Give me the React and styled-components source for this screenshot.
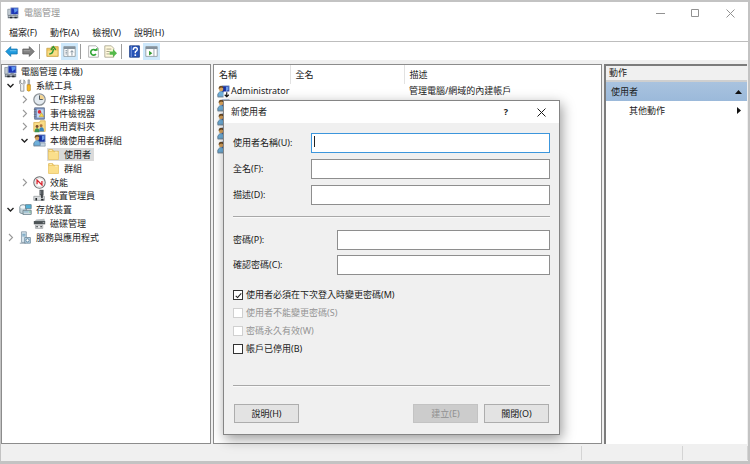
import React from 'react';
import styled, { createGlobalStyle, css } from 'styled-components';

const GlobalStyle = createGlobalStyle`
  *, *::before, *::after { box-sizing: border-box; }
  body {
    margin: 0;
    background: #fff;
    color: #1a1a1a;
    font: 9px/14px "Noto Sans", "Noto Sans CJK TC", sans-serif;
  }
  button, input { font: inherit; color: inherit; }
`;

const Window = styled.div`
  position: relative;
  display: flex;
  flex-direction: column;
  min-height: 100vh;
  border: solid #c3c3c3;
  border-width: 2px 2px 3px 1px;
  background: #f0f0f0;
`;

const TitleBar = styled.header`
  display: flex;
  align-items: center;
  gap: 5px;
  height: 22px;
  padding: 0 13px 0 6px;
  background: #fff;
  color: #929292;
`;

const WindowTitle = styled.h1`
  flex: 1;
  margin: 0;
  font: inherit;
`;

const WindowControls = styled.div`
  display: flex;
  gap: 25px;
`;

const IconButton = styled.button`
  display: flex;
  align-items: center;
  justify-content: center;
  width: 10px;
  height: 14px;
  padding: 0;
  border: 0;
  background: none;
`;

const MenuBar = styled.nav`
  display: flex;
  gap: 13px;
  height: 18px;
  padding: 0 8px;
  border-bottom: 1px solid #bdbdbd;
  background: #fff;
`;

const MenuButton = styled.button`
  padding: 0;
  border: 0;
  background: none;
  line-height: 17px;
`;

const Toolbar = styled.div`
  display: flex;
  align-items: center;
  height: 18px;
  padding-left: 2px;
  background: #fff;
`;

const ToolButton = styled.button`
  display: flex;
  align-items: center;
  justify-content: center;
  width: 17px;
  height: 17px;
  padding: 0;
  border: 0;
  background: ${({ $active }) => ($active ? '#cde8fb' : 'none')};
`;

const ToolSeparator = styled.span`
  width: 1px;
  height: 15px;
  margin: 0 4px 0 2px;
  background: #9c9c9c;
`;

const Panes = styled.main`
  flex: 1;
  display: grid;
  grid-template-columns: 210px 1fr 143px;
  gap: 2px;
  padding: 4px 1px 0 0;
`;

const Pane = styled.section`
  min-width: 0;
  border: 1px solid #8c8c8c;
  background: #fff;
`;

const Tree = styled.ul`
  display: grid;
  grid-auto-rows: 1fr;
  height: 179px;
  margin: 0;
  padding: 0;
  list-style: none;
  line-height: 13px;
`;

const TreeRow = styled.li`
  display: flex;
  align-items: center;
  gap: 4px;
  padding-left: ${({ $level }) => ($level ? 4 + 14 * ($level - 1) : 2)}px;
`;

const TreeToggle = styled.button`
  display: flex;
  width: 9px;
  padding: 0;
  border: 0;
  background: none;
  color: ${({ $open }) => ($open ? '#222' : '#999')};
`;

const TogglePlace = styled.span`
  width: 9px;
`;

const TreeLabel = styled.span`
  display: flex;
  align-items: center;
  gap: 4px;
  padding-right: 3px;
  white-space: nowrap;
  background: ${({ $selected }) => ($selected ? '#dadada' : 'none')};
`;

const Icon = styled.svg`
  display: block;
  flex: none;
  width: ${({ $size = 13 }) => $size}px;
  height: ${({ $size = 13 }) => $size}px;
`;

const UserTable = styled.table`
  width: 100%;
  table-layout: fixed;
  border-collapse: collapse;
`;

const HeadCell = styled.th`
  width: ${({ $width }) => ($width ? `${$width}px` : 'auto')};
  height: 19px;
  padding: 0 5px;
  border-right: ${({ $width }) => ($width ? '1px solid #e2e2e2' : '0')};
  font-weight: 400;
  text-align: left;
`;

const Cell = styled.td`
  height: 14px;
  padding: 0 5px;
  white-space: nowrap;
`;

const NameCell = styled(Cell)`
  padding: 0 3px;
`;

const UserName = styled.span`
  display: flex;
  align-items: center;
  gap: 1px;
`;

const ActionsPane = styled.aside`
  border: solid #7c7c7c;
  border-width: 2px 0 0 2px;
  background: #fff;
`;

const ActionsHeading = styled.h2`
  height: 16px;
  margin: 0;
  padding-left: 3px;
  border-bottom: 2px solid #cfcfcf;
  background: #f0f0f0;
  font: inherit;
`;

const ActionRow = styled.button`
  display: flex;
  align-items: center;
  justify-content: space-between;
  width: 100%;
  height: 19px;
  padding: 0 5px 0 ${({ $heading }) => ($heading ? 5 : 23)}px;
  border: 0;
  background: ${({ $heading }) => ($heading ? 'linear-gradient(#a9c3df, #9bb9da)' : 'none')};
`;

const StatusBar = styled.footer`
  display: grid;
  grid-template-columns: 1fr 101px 65px;
  height: 17px;
  padding-top: 2px;
`;

const StatusCell = styled.span`
  margin-bottom: 1px;
  border-right: 1px solid #d4d4d4;
`;

const Dialog = styled.section`
  position: absolute;
  top: 98px;
  left: 222px;
  width: 337px;
  border: 1px solid #858585;
  background: #f0f0f0;
  box-shadow: 2px 4px 12px rgba(0, 0, 0, 0.4);
`;

const DialogTitleBar = styled.header`
  display: flex;
  align-items: center;
  gap: 25px;
  height: 22px;
  padding: 0 13px 0 7px;
  background: #fff;
`;

const DialogTitle = styled.h2`
  flex: 1;
  margin: 0;
  font: inherit;
`;

const Form = styled.form`
  display: flex;
  flex-direction: column;
  padding: 10px 9px 11px;
`;

const Fields = styled.div`
  display: grid;
  gap: ${({ $gap }) => $gap}px;
`;

const Field = styled.label`
  display: grid;
  grid-template-columns: ${({ $labelWidth }) => $labelWidth}px 1fr;
  align-items: center;
`;

const InputBox = styled.span`
  position: relative;
  display: flex;
`;

const TextInput = styled.input`
  width: 100%;
  height: 20px;
  padding: 0 3px;
  border: 1px solid ${({ $focused }) => ($focused ? '#3c96dc' : '#8e8e8e')};
  border-radius: 0;
  outline: 0;
  background: #fff;
`;

const Caret = styled.span`
  position: absolute;
  top: 3px;
  left: 3px;
  width: 1px;
  height: 11px;
  background: #222;
`;

const Divider = styled.hr`
  width: 100%;
  height: 2px;
  margin: ${({ $top, $bottom }) => `${$top}px 0 ${$bottom}px`};
  border: 0;
  border-top: 1px solid #a8a8a8;
  border-bottom: 1px solid #fafafa;
`;

const Checks = styled.div`
  display: grid;
  gap: 4px;
  margin-top: 13px;
`;

const CheckLabel = styled.label`
  display: flex;
  align-items: center;
  gap: 3px;
  height: 14px;
  color: ${({ $disabled }) => ($disabled ? '#949494' : 'inherit')};
`;

const tick = css`
  &:checked::after {
    content: "";
    width: 3px;
    height: 6px;
    margin-bottom: 1px;
    border: solid #222;
    border-width: 0 1px 1px 0;
    transform: rotate(42deg);
  }
`;

const CheckBox = styled.input`
  appearance: none;
  display: flex;
  align-items: center;
  justify-content: center;
  width: 10px;
  height: 10px;
  margin: 0;
  border: 1px solid #333;
  background: #fff;
  &:disabled { border-color: #d0d0d0; }
  ${tick}
`;

const Buttons = styled.div`
  display: flex;
  gap: 6px;
  padding: 0 1px;
`;

const PushButton = styled.button`
  width: 65px;
  height: 19px;
  margin-right: ${({ $lead }) => ($lead ? 'auto' : '0')};
  padding: 0;
  border: 1px solid #adadad;
  background: #e3e3e3;
  line-height: 15px;
  &:disabled {
    border-color: #c3c3c3;
    background: #cccccc;
    color: #909090;
  }
`;

function ComputerIcon({ size }) {
  return (
    <Icon $size={size} viewBox="0 0 16 16" aria-hidden="true">
      <path d="M1 3h4v8H1z" fill="#c3ccd4" stroke="#8a949e" />
      <path d="M5 1h10v9H5z" fill="#1d35b4" stroke="#a5b7cf" />
      <path d="M9 2h5v3l-4 3z" fill="#5d96ef" />
      <path d="M8 10h4v1H8z" fill="#7b8590" />
      <path d="M1 11h14v4H1z" fill="#6d7780" />
      <path d="M2 12h12v1H2z" fill="#dce3e9" />
      <path d="M4 13h3v2H4zM10 13h3v2h-3z" fill="#242a30" />
    </Icon>
  );
}

function ToolsIcon() {
  return (
    <Icon viewBox="0 0 16 16" aria-hidden="true">
      <path d="M2 1v4l2 1 2-1V1c2 1 2 5 0 6v8H2V7C0 6 0 2 2 1z" fill="#f2f4f5" stroke="#85898c" />
      <path d="M11 1h2v6h-2z" fill="#b5b9bd" stroke="#777c80" strokeWidth=".6" />
      <path d="M10 7h4v7q-2 2-4 0z" fill="#f6b826" stroke="#b07a0c" strokeWidth=".7" />
    </Icon>
  );
}

function ClockIcon() {
  return (
    <Icon viewBox="0 0 16 16" aria-hidden="true">
      <circle cx="8" cy="8" r="7" fill="#e3eaf0" stroke="#8b9196" strokeWidth="1.500" />
      <path d="M8 8V2a6 6 0 0 1 6 6z" fill="#f3d491" />
      <path d="M8 3v5h4" fill="none" stroke="#4e5860" strokeWidth="1.200" />
    </Icon>
  );
}

function EventIcon() {
  return (
    <Icon viewBox="0 0 16 16" aria-hidden="true">
      <path d="M2 1h12v14H2z" fill="#7d96c4" stroke="#5c6a88" />
      <path d="M1 3h3M1 6h3M1 9h3M1 12h3" stroke="#5e6676" />
      <path d="M5 3h8v10H5z" fill="#c6dbf4" />
      <circle cx="8" cy="6" r="2.200" fill="#d92b38" />
      <path d="m10.500 7 3 5h-6z" fill="#f8d84e" stroke="#9b7d19" strokeWidth=".5" />
    </Icon>
  );
}

function SharedFolderIcon() {
  return (
    <Icon viewBox="0 0 16 16" aria-hidden="true">
      <path d="M1 3h7l1-2h6v13H1z" fill="#f9dc85" stroke="#d9b254" />
      <circle cx="5" cy="8" r="1.800" fill="#7b4d2c" />
      <circle cx="10" cy="7" r="1.800" fill="#a86f42" />
      <path d="M2 15q0-5 3-5t3 5z" fill="#3c9352" />
      <path d="M7.500 14q0-5 3-5t3 5z" fill="#3684bd" />
    </Icon>
  );
}

function UsersIcon({ size, disabled }) {
  return (
    <Icon $size={size} viewBox="0 0 16 16" aria-hidden="true">
      <path d="M6 1h9v9H6z" fill="#1730a0" stroke="#9db1ce" />
      <path d="M11 2h3v4l-3 2z" fill="#6b9cea" />
      <path d="M1 11h14v4H1z" fill="#c4d4e2" stroke="#738497" strokeWidth=".7" />
      <circle cx="5" cy="5" r="2.800" fill="#d9a35c" />
      <path d="M2 5q0-4 3-4 3 0 3 3L5 3z" fill="#6b4a25" />
      <path d="M1 14q0-6 4-6t4 6z" fill="#6fb0dc" stroke="#42637c" strokeWidth=".6" />
      {disabled && (
        <>
          <path d="M8 8h8v8H8z" fill="#fff" />
          <path d="M12 9v5M9.500 12l2.500 2.500 2.500-2.500" fill="none" stroke="#111" strokeWidth="1.400" />
        </>
      )}
    </Icon>
  );
}

function FolderIcon() {
  return (
    <Icon viewBox="0 0 16 16" aria-hidden="true">
      <path d="M2 2h5l1 2h6v10H2z" fill="#f2cd6a" stroke="#dcb655" />
      <path d="M2 5h12v9H2z" fill="#fbdf8b" />
      <path d="M3 3h3M10 5h3" stroke="#fff5d2" />
    </Icon>
  );
}

function PerformanceIcon() {
  return (
    <Icon viewBox="0 0 16 16" aria-hidden="true">
      <circle cx="8" cy="8" r="7" fill="#fff" stroke="#6d7072" strokeWidth="1.300" />
      <circle cx="8" cy="8" r="5" fill="none" stroke="#dcdcdc" />
      <path d="M5 10V5l6 6V6" fill="none" stroke="#d7232d" strokeWidth="1.600" />
    </Icon>
  );
}

function DeviceIcon() {
  return (
    <Icon viewBox="0 0 16 16" aria-hidden="true">
      <path d="M8 1h5v7H8z" fill="#50565a" />
      <path d="M9 2h1v4H9z" fill="#8a9196" />
      <path d="M1 9h13v5H1z" fill="#d9dcde" stroke="#9a9fa3" />
      <path d="M10 7h2v4h-2z" fill="#303538" />
      <path d="M3 11h2v3H3zM10 12h3v2h-3z" fill="#25292c" />
    </Icon>
  );
}

function StorageIcon() {
  return (
    <Icon viewBox="0 0 16 16" aria-hidden="true">
      <path d="M1 5q0-3 4-3t4 3v7q-4 3-8 0z" fill="#c3d3da" stroke="#71858e" />
      <ellipse cx="5" cy="5" rx="3.500" ry="2" fill="#f1f6f8" />
      <path d="M8 2h7v5H8z" fill="#52afd5" stroke="#65818f" />
      <path d="M5 9h10v5H5z" fill="#d8e4e9" stroke="#5c7580" />
      <path d="M6 11h6" stroke="#5a9bb8" />
      <path d="M13 11h1" stroke="#29a74a" strokeWidth="2" />
    </Icon>
  );
}

function DiskIcon() {
  return (
    <Icon viewBox="0 0 16 16" aria-hidden="true">
      <path d="m4 3 10-1 1 4H1z" fill="#b4babd" />
      <path d="M1 5h14v4H1z" fill="#4c5356" />
      <path d="M3 10h9v4H3z" fill="#e4e6e7" stroke="#a0a4a7" />
      <path d="M4 12h2M9 12h2" stroke="#232729" strokeWidth="1.500" />
      <path d="M12 7h2" stroke="#c9ced1" />
    </Icon>
  );
}

function ServicesIcon() {
  return (
    <Icon viewBox="0 0 16 16" aria-hidden="true">
      <path d="M3 1h6v13H3z" fill="#d8e5ee" stroke="#8296a4" />
      <path d="M4 4h4M4 6h4" stroke="#4c8aaf" />
      <path d="M7 8h7v7H7z" fill="#b9d5e8" stroke="#70899a" />
      <circle cx="10.500" cy="11.500" r="2" fill="#fff" stroke="#4c7892" />
      <path d="M1 15h7" stroke="#778d9c" />
    </Icon>
  );
}

function ArrowIcon({ forward }) {
  return (
    <Icon viewBox="0 0 16 16" aria-hidden="true">
      <path
        d={forward ? 'M15 8 9 2v3H1v6h8v3z' : 'M1 8l6-6v3h8v6H7v3z'}
        fill={forward ? '#818181' : '#1e9ade'}
        stroke={forward ? '#5d5d5d' : '#1676b1'}
      />
      <path d={forward ? 'M2 7h8' : 'M6 7h8'} stroke={forward ? '#aaa' : '#77c8ef'} />
    </Icon>
  );
}

function UpFolderIcon() {
  return (
    <Icon viewBox="0 0 16 16" aria-hidden="true">
      <path d="M1 4h5l1-2h8v12H1z" fill="#f0c75e" stroke="#c9a44a" />
      <path d="M2 7h12v6H2z" fill="#f9dd88" />
      <path d="M4 11q5 0 5-6M6 6l3-4 3 4" fill="none" stroke="#2e9635" strokeWidth="1.800" />
    </Icon>
  );
}

function PaneIcon({ run }) {
  return (
    <Icon viewBox="0 0 16 16" aria-hidden="true">
      <path d="M1 2h14v12H1z" fill="#fff" stroke="#8b969d" />
      <path d="M1 2h14v3H1z" fill="#83919c" />
      <path d={run ? 'M11 5v9' : 'M6 5v9'} stroke="#8b969d" />
      {run ? <path d="m5 7 4 3-4 3z" fill="#349a32" /> : <path d="M3 7h2M3 9h2M3 11h2M11 7v6M9 9l2-2 2 2" fill="none" stroke="#6d7e8c" />}
    </Icon>
  );
}

function RefreshIcon() {
  return (
    <Icon viewBox="0 0 16 16" aria-hidden="true">
      <path d="M2 1h9l3 3v11H2z" fill="#fff" stroke="#a3a3a3" />
      <path d="M11 7a3.500 3.500 0 1 0 0 4" fill="none" stroke="#35a63a" strokeWidth="2" />
      <path d="M8 7h5V3z" fill="#35a63a" />
    </Icon>
  );
}

function ExportIcon() {
  return (
    <Icon viewBox="0 0 16 16" aria-hidden="true">
      <path d="M1 1h8l3 3v11H1z" fill="#fff9dc" stroke="#a4a08b" />
      <path d="M3 5h6M3 8h4M3 11h4" stroke="#99947b" />
      <path d="M7 8h4V5l5 5-5 5v-3H7z" fill="#54b94a" />
    </Icon>
  );
}

function HelpIcon() {
  return (
    <Icon viewBox="0 0 16 16" aria-hidden="true">
      <path d="M2 1h12v14H2z" fill="#2754b8" stroke="#193a83" />
      <path d="M4 1v14" stroke="#8ba9e8" />
      <path d="M6.500 6q0-3 2.500-3t2.500 2.500Q11.500 7 9 8.500V10" fill="none" stroke="#fff" strokeWidth="1.700" />
      <path d="M8 11.500h2v2H8z" fill="#fff" />
    </Icon>
  );
}

function Chevron({ open }) {
  return (
    <Icon $size={9} viewBox="0 0 9 9" fill="none" stroke="currentColor" strokeWidth={open ? 1.4 : 1.1} aria-hidden="true">
      <path d={open ? 'M1.500 3l3 3 3-3' : 'M3 1l3.500 3.500L3 8'} />
    </Icon>
  );
}

function ControlGlyph({ d, width = 1 }) {
  return (
    <Icon $size={9} viewBox="0 0 9 9" fill="none" stroke="currentColor" strokeWidth={width} aria-hidden="true">
      <path d={d} />
    </Icon>
  );
}

const CLOSE = 'M.5.5l8 8M8.500.5l-8 8';

const treeItems = [
  { label: '電腦管理 (本機)', level: 0, icon: ComputerIcon },
  { label: '系統工具', level: 1, icon: ToolsIcon, open: true },
  { label: '工作排程器', level: 2, icon: ClockIcon, open: false },
  { label: '事件檢視器', level: 2, icon: EventIcon, open: false },
  { label: '共用資料夾', level: 2, icon: SharedFolderIcon, open: false },
  { label: '本機使用者和群組', level: 2, icon: UsersIcon, open: true },
  { label: '使用者', level: 3, icon: FolderIcon, selected: true },
  { label: '群組', level: 3, icon: FolderIcon },
  { label: '效能', level: 2, icon: PerformanceIcon, open: false },
  { label: '裝置管理員', level: 2, icon: DeviceIcon },
  { label: '存放裝置', level: 1, icon: StorageIcon, open: true },
  { label: '磁碟管理', level: 2, icon: DiskIcon },
  { label: '服務與應用程式', level: 1, icon: ServicesIcon, open: false },
];

const users = [
  { name: 'Administrator', description: '管理電腦/網域的內建帳戶', disabled: true },
  {}, {}, {}, {},
];

const checks = [
  { label: '使用者必須在下次登入時變更密碼(M)', checked: true },
  { label: '使用者不能變更密碼(S)', disabled: true },
  { label: '密碼永久有效(W)', disabled: true },
  { label: '帳戶已停用(B)' },
];

function Tool({ label, active, children }) {
  return <ToolButton type="button" aria-label={label} $active={active}>{children}</ToolButton>;
}

function TextField({ label, labelWidth, focused, type = 'text' }) {
  return (
    <Field $labelWidth={labelWidth}>
      <span>{label}</span>
      <InputBox>
        <TextInput type={type} $focused={focused} />
        {focused && <Caret />}
      </InputBox>
    </Field>
  );
}

function NewUserDialog() {
  return (
    <Dialog role="dialog" aria-labelledby="dialog-title">
      <DialogTitleBar>
        <DialogTitle id="dialog-title">新使用者</DialogTitle>
        <IconButton type="button" aria-label="說明"><strong>?</strong></IconButton>
        <IconButton type="button" aria-label="關閉"><ControlGlyph d={CLOSE} /></IconButton>
      </DialogTitleBar>
      <Form onSubmit={(event) => event.preventDefault()}>
        <Fields $gap={6}>
          <TextField label="使用者名稱(U):" labelWidth={78} focused />
          <TextField label="全名(F):" labelWidth={78} />
          <TextField label="描述(D):" labelWidth={78} />
        </Fields>
        <Divider $top={11} $bottom={12} />
        <Fields $gap={5}>
          <TextField label="密碼(P):" labelWidth={104} type="password" />
          <TextField label="確認密碼(C):" labelWidth={104} type="password" />
        </Fields>
        <Checks>
          {checks.map(({ label, checked, disabled }) => (
            <CheckLabel key={label} $disabled={disabled}>
              <CheckBox type="checkbox" defaultChecked={checked} disabled={disabled} />
              {label}
            </CheckLabel>
          ))}
        </Checks>
        <Divider $top={29} $bottom={17} />
        <Buttons>
          <PushButton type="button" $lead>說明(H)</PushButton>
          <PushButton type="submit" disabled>建立(E)</PushButton>
          <PushButton type="button">關閉(O)</PushButton>
        </Buttons>
      </Form>
    </Dialog>
  );
}

export default function App() {
  return (
    <>
      <GlobalStyle />
      <Window>
        <TitleBar>
          <ComputerIcon size={12} />
          <WindowTitle>電腦管理</WindowTitle>
          <WindowControls>
            <IconButton type="button" aria-label="最小化"><ControlGlyph d="M0 4.500h9" /></IconButton>
            <IconButton type="button" aria-label="最大化"><ControlGlyph d="M.5.5h7v7h-7z" /></IconButton>
            <IconButton type="button" aria-label="關閉"><ControlGlyph d={CLOSE} /></IconButton>
          </WindowControls>
        </TitleBar>
        <MenuBar>
          {['檔案(F)', '動作(A)', '檢視(V)', '說明(H)'].map((item) => (
            <MenuButton key={item} type="button">{item}</MenuButton>
          ))}
        </MenuBar>
        <Toolbar>
          <Tool label="上一頁"><ArrowIcon /></Tool>
          <Tool label="下一頁"><ArrowIcon forward /></Tool>
          <ToolSeparator />
          <Tool label="上移一層"><UpFolderIcon /></Tool>
          <Tool label="顯示主控台樹狀目錄" active><PaneIcon /></Tool>
          <ToolSeparator />
          <Tool label="重新整理"><RefreshIcon /></Tool>
          <Tool label="匯出清單"><ExportIcon /></Tool>
          <ToolSeparator />
          <Tool label="說明"><HelpIcon /></Tool>
          <Tool label="顯示動作窗格" active><PaneIcon run /></Tool>
        </Toolbar>
        <Panes>
          <Pane>
            <Tree>
              {treeItems.map(({ label, level, icon: ItemIcon, open, selected }) => (
                <TreeRow key={label} $level={level}>
                  {level > 0 && (open === undefined ? <TogglePlace /> : (
                    <TreeToggle type="button" aria-label={label} aria-expanded={open} $open={open}>
                      <Chevron open={open} />
                    </TreeToggle>
                  ))}
                  <TreeLabel $selected={selected}>
                    <ItemIcon />
                    {label}
                  </TreeLabel>
                </TreeRow>
              ))}
            </Tree>
          </Pane>
          <Pane>
            <UserTable>
              <thead>
                <tr>
                  <HeadCell $width={76}>名稱</HeadCell>
                  <HeadCell $width={114}>全名</HeadCell>
                  <HeadCell>描述</HeadCell>
                </tr>
              </thead>
              <tbody>
                {users.map(({ name, description, disabled }, index) => (
                  <tr key={index}>
                    <NameCell>
                      <UserName><UsersIcon disabled={disabled} />{name}</UserName>
                    </NameCell>
                    <Cell />
                    <Cell>{description}</Cell>
                  </tr>
                ))}
              </tbody>
            </UserTable>
          </Pane>
          <ActionsPane>
            <ActionsHeading>動作</ActionsHeading>
            <ActionRow type="button" $heading>
              使用者
              <Icon $size={7} viewBox="0 0 7 7" aria-hidden="true"><path d="M0 6l3.500-4L7 6z" fill="#111" /></Icon>
            </ActionRow>
            <ActionRow type="button">
              其他動作
              <Icon $size={7} viewBox="0 0 7 7" aria-hidden="true"><path d="M2 0l4 3.500L2 7z" fill="#111" /></Icon>
            </ActionRow>
          </ActionsPane>
        </Panes>
        <StatusBar>
          <StatusCell />
          <StatusCell />
          <StatusCell />
        </StatusBar>
        <NewUserDialog />
      </Window>
    </>
  );
}
